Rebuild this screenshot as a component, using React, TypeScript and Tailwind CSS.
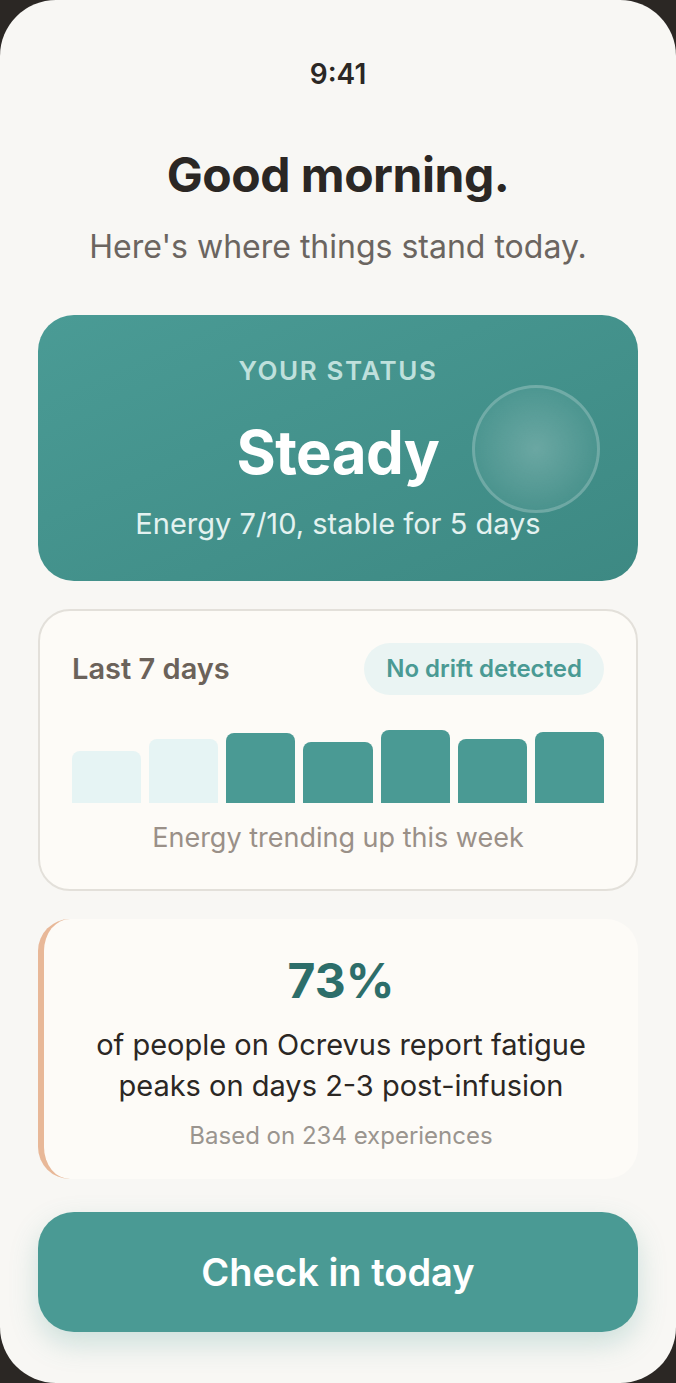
import React from "react";

const bars = [
  { h: 52, light: true },
  { h: 64, light: true },
  { h: 70, light: false },
  { h: 61, light: false },
  { h: 73, light: false },
  { h: 64, light: false },
  { h: 71, light: false },
];

export default function App() {
  return (
    <div className="w-[676px] h-[1383px] bg-[#2b2724]" style={{ fontFamily: "Inter, 'Noto Sans', sans-serif" }}>
      <div className="h-full rounded-[56px] bg-[#f8f7f4] px-[38px] pt-[60px] flex flex-col">
        <div className="text-center text-[28px] leading-[28px] font-semibold text-[#2b2724]">9:41</div>
        <h1 className="mt-[61px] text-center text-[48px] leading-[52px] font-bold text-[#2b2724] tracking-[-0.01em]">Good morning.</h1>
        <p className="mt-[28px] text-center text-[32px] leading-[36px] text-[#6b6560]">Here's where things stand today.</p>

        <div className="mt-[50px] relative h-[266px] rounded-[36px] bg-gradient-to-br from-[#4a9b95] to-[#3d8983] pt-[42px] overflow-hidden">
          <div className="absolute left-[434px] top-[70px] w-[128px] h-[128px] rounded-full border-[3px] border-[rgba(255,255,255,0.2)] bg-[radial-gradient(circle,rgba(255,255,255,0.22)_0%,rgba(255,255,255,0.06)_70%,rgba(255,255,255,0.03)_100%)]" />
          <div className="relative text-center text-[26px] leading-[28px] font-semibold tracking-[0.06em] text-[#bfe0dc]">YOUR STATUS</div>
          <div className="relative mt-[31px] text-center text-[60px] leading-[72px] font-bold text-white tracking-[-0.01em]">Steady</div>
          <div className="relative mt-[19px] text-center text-[29px] leading-[34px] text-[#e3f2f0]">Energy 7/10, stable for 5 days</div>
        </div>

        <div className="mt-[28px] h-[282px] rounded-[32px] border-2 border-[#e3e0da] bg-[#fdfbf7] px-[32px] pt-[32px]">
          <div className="flex items-center justify-between">
            <div className="text-[29px] leading-[34px] font-semibold text-[#6b625a]">Last 7 days</div>
            <div className="h-[52px] px-[22px] rounded-full bg-[#eaf4f3] flex items-center text-[24px] font-semibold text-[#4a9a94]">No drift detected</div>
          </div>
          <div className="mt-[28px] h-[80px] flex items-end gap-[8px]">
            {bars.map((b, i) => (
              <div
                key={i}
                className={`flex-1 rounded-t-[8px] ${b.light ? "bg-[#e6f4f4]" : "bg-[#4a9a94]"}`}
                style={{ height: b.h }}
              />
            ))}
          </div>
          <div className="mt-[19px] text-center text-[27px] leading-[32px] text-[#9a9088]">Energy trending up this week</div>
        </div>

        <div className="mt-[28px] h-[260px] rounded-[32px] border-l-[6px] border-[#e8b898] bg-[#fdfbf7] pt-[34px] text-center">
          <div className="text-[48px] leading-[56px] font-bold text-[#2d6e6a]">73%</div>
          <div className="mt-[15px] text-[29px] leading-[41px] text-[#2b2724]">
            of people on Ocrevus report fatigue
            <br />
            peaks on days 2-3 post-infusion
          </div>
          <div className="mt-[15px] text-[24px] leading-[30px] text-[#9a958f]">Based on 234 experiences</div>
        </div>

        <button className="mt-[33px] h-[120px] rounded-[36px] bg-[#4a9a94] text-white text-[38px] font-semibold shadow-[0_12px_28px_rgba(74,154,148,0.25)]">
          Check in today
        </button>
      </div>
    </div>
  );
}
